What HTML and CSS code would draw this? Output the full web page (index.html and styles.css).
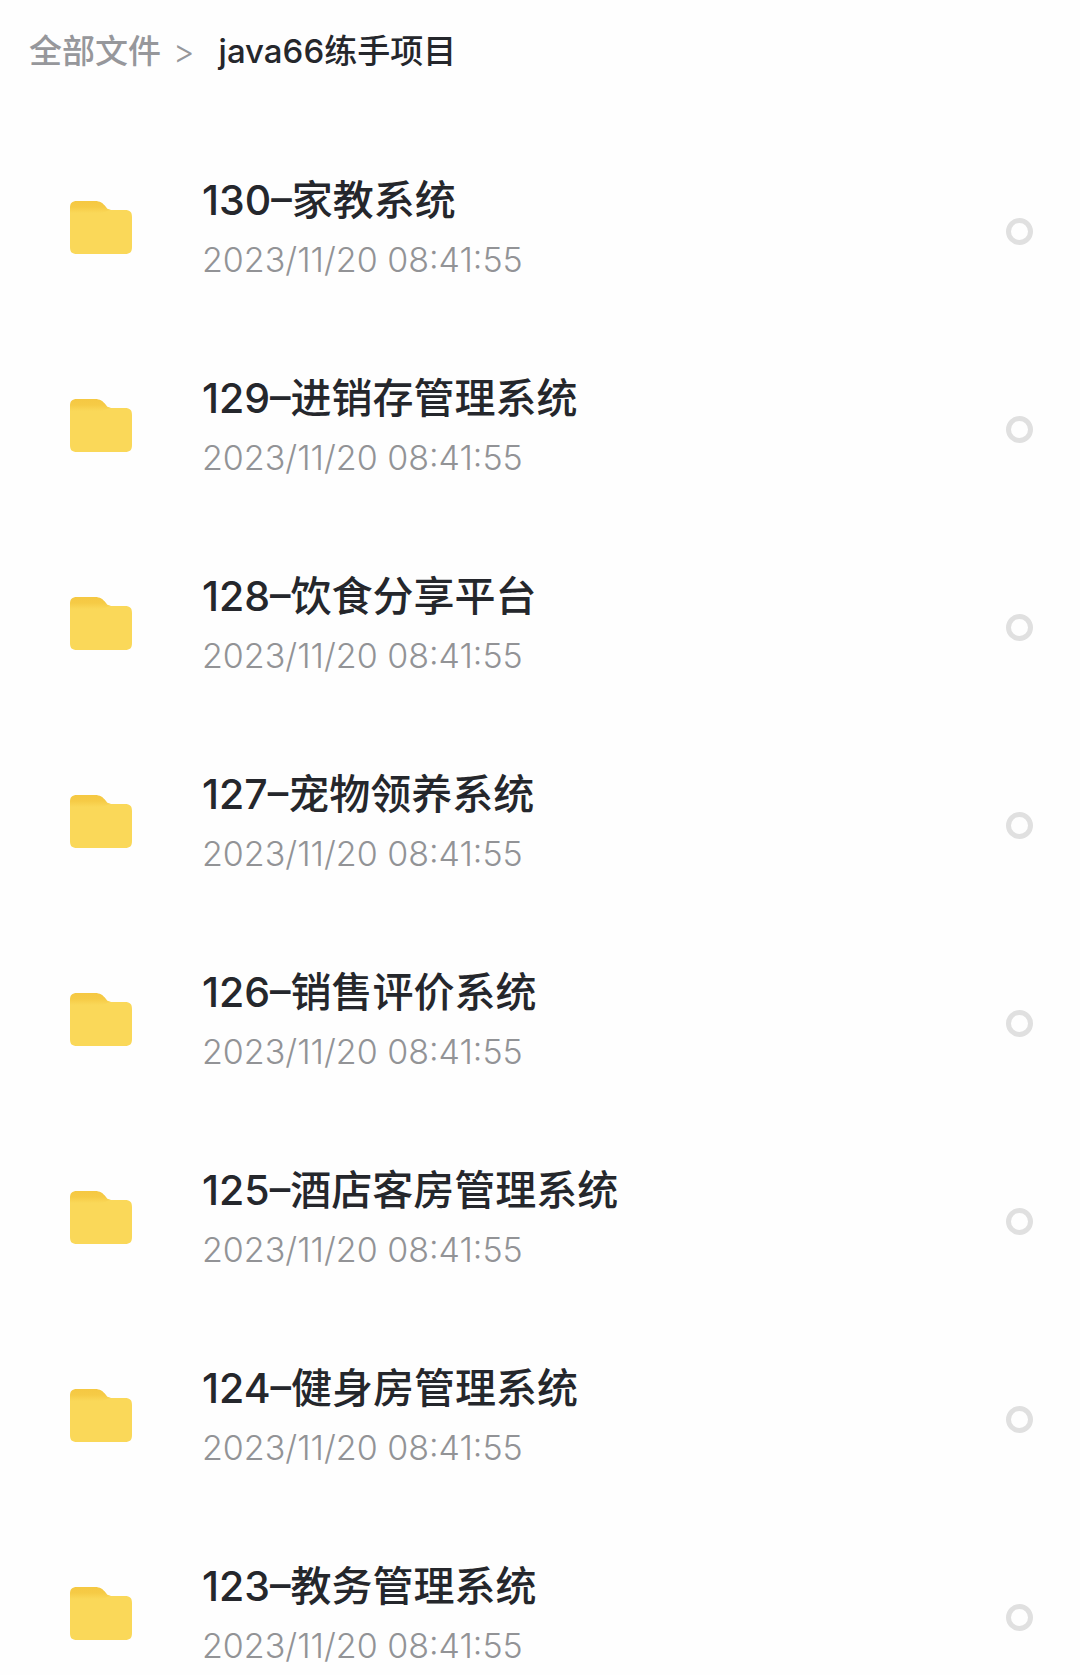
FILE: index.html
```html
<!DOCTYPE html>
<html lang="zh-CN">
<head>
	<meta charset="utf-8">
	<meta name="viewport" content="width=device-width, initial-scale=1">
	<title>java66练手项目</title>
	<link rel="stylesheet" href="styles.css">
</head>
<body>
	<svg width="0" height="0" class="sprite" aria-hidden="true">
		<defs>
			<linearGradient id="tab" x1="0" y1="0" x2="0" y2="1">
				<stop offset="0" stop-color="#f5c842"/>
				<stop offset="0.5" stop-color="#f6cb46"/>
				<stop offset="1" stop-color="#fad859"/>
			</linearGradient>
		</defs>
		<symbol id="folder" viewBox="0 0 62 53">
			<path fill="#fad859" d="M0 8H38L41 9H55C60 9 62 11 62 16V46C62 51 60 53 55 53H7C2 53 0 51 0 46Z"/>
			<path fill="url(#tab)" d="M7 0H25C30 0 33 2 36 6C37 8 39 9 41 9C38 9 36 11 32 12H0V7C0 2 2 0 7 0Z"/>
		</symbol>
	</svg>

	<nav class="breadcrumb">
		<a href="#">全部文件</a>
		<span class="arrow">&gt;</span>
		<span class="current">java66练手项目</span>
	</nav>

	<ul class="files">
		<li class="file">
			<svg class="icon"><use href="#folder"/></svg>
			<label class="info" for="f130">
				<span class="name">130–家教系统</span>
				<span class="date">2023/11/20 08:41:55</span>
			</label>
			<input type="checkbox" class="check" id="f130">
		</li>
		<li class="file">
			<svg class="icon"><use href="#folder"/></svg>
			<label class="info" for="f129">
				<span class="name">129–进销存管理系统</span>
				<span class="date">2023/11/20 08:41:55</span>
			</label>
			<input type="checkbox" class="check" id="f129">
		</li>
		<li class="file">
			<svg class="icon"><use href="#folder"/></svg>
			<label class="info" for="f128">
				<span class="name">128–饮食分享平台</span>
				<span class="date">2023/11/20 08:41:55</span>
			</label>
			<input type="checkbox" class="check" id="f128">
		</li>
		<li class="file">
			<svg class="icon"><use href="#folder"/></svg>
			<label class="info" for="f127">
				<span class="name">127–宠物领养系统</span>
				<span class="date">2023/11/20 08:41:55</span>
			</label>
			<input type="checkbox" class="check" id="f127">
		</li>
		<li class="file">
			<svg class="icon"><use href="#folder"/></svg>
			<label class="info" for="f126">
				<span class="name">126–销售评价系统</span>
				<span class="date">2023/11/20 08:41:55</span>
			</label>
			<input type="checkbox" class="check" id="f126">
		</li>
		<li class="file">
			<svg class="icon"><use href="#folder"/></svg>
			<label class="info" for="f125">
				<span class="name">125–酒店客房管理系统</span>
				<span class="date">2023/11/20 08:41:55</span>
			</label>
			<input type="checkbox" class="check" id="f125">
		</li>
		<li class="file">
			<svg class="icon"><use href="#folder"/></svg>
			<label class="info" for="f124">
				<span class="name">124–健身房管理系统</span>
				<span class="date">2023/11/20 08:41:55</span>
			</label>
			<input type="checkbox" class="check" id="f124">
		</li>
		<li class="file">
			<svg class="icon"><use href="#folder"/></svg>
			<label class="info" for="f123">
				<span class="name">123–教务管理系统</span>
				<span class="date">2023/11/20 08:41:55</span>
			</label>
			<input type="checkbox" class="check" id="f123">
		</li>
	</ul>
</body>
</html>
```

FILE: styles.css
```css
body{
	margin: 0;
	background: #fefefe;
	color: #25272c;
	font-family: Inter, "Noto Sans CJK SC", sans-serif;
}
.sprite{
	position: absolute;
}
.breadcrumb{
	display: flex;
	align-items: center;
	padding: 27px 29px 0;
	font-size: 33px;
	line-height: 48px;
	font-weight: 500;
}
.breadcrumb a{
	color: #96979b;
	text-decoration: none;
}
.arrow{
	margin: 0 24px 0 12px;
	color: #96979b;
	font-weight: 300;
}
.files{
	display: flex;
	flex-direction: column;
	gap: 85px;
	margin: 0;
	padding: 94px 47px 0 70px;
	list-style: none;
}
.file{
	display: flex;
	align-items: center;
}
.icon{
	width: 62px;
	height: 53px;
	margin-top: 4px;
}
.info{
	flex: 1;
	display: flex;
	flex-direction: column;
	gap: 7px;
	margin-left: 70px;
	cursor: pointer;
}
.name{
	font-size: 41px;
	line-height: 62px;
	font-weight: 500;
}
.date{
	color: #929396;
	font-size: 34px;
	line-height: 44px;
	font-weight: 300;
}
.check{
	appearance: none;
	box-sizing: border-box;
	width: 27px;
	height: 27px;
	margin: 12px 0 0;
	border: 5px solid #e0e0e0;
	border-radius: 50%;
	cursor: pointer;
}
.check:checked{
	border-color: #fad859;
	background: #fad859;
}
```
